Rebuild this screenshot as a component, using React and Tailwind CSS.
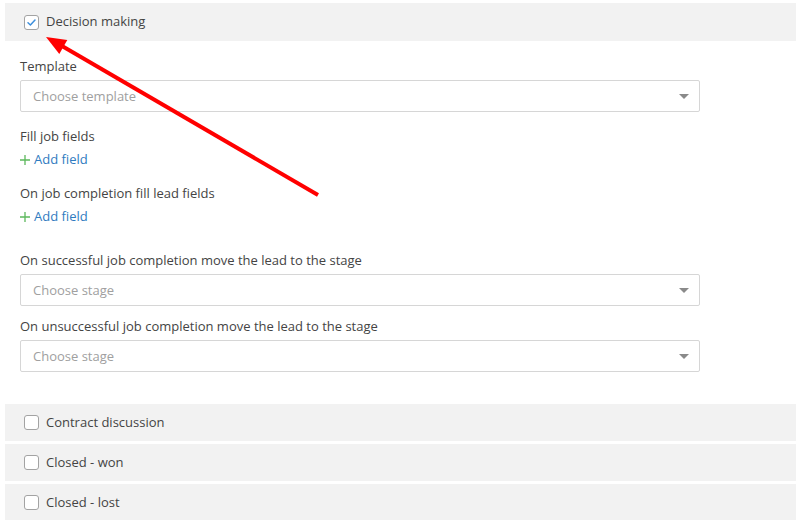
import React from "react";

function Checkbox({ checked }) {
  return (
    <div className="w-[15px] h-[15px] rounded-[3px] border border-[#a3a3a3] bg-white flex items-center justify-center shrink-0">
      {checked && (
        <svg width="11" height="11" viewBox="0 0 11 11">
          <path d="M2 5.8 L4.4 8 L9 3" fill="none" stroke="#3d8fdc" strokeWidth="1.5" strokeLinecap="round" strokeLinejoin="round" />
        </svg>
      )}
    </div>
  );
}

function Row({ label, checked, className = "" }) {
  return (
    <div className={"h-[37px] bg-[#f2f2f2] flex items-center pl-[19px] gap-[7px] " + className}>
      <Checkbox checked={checked} />
      <span className="text-[13px] text-[#444]">{label}</span>
    </div>
  );
}

function Select({ placeholder, className = "" }) {
  return (
    <div className={"w-[680px] h-[32px] border border-[#d6d6d6] rounded-[2px] bg-white flex items-center justify-between pl-[12px] pr-[10px] " + className}>
      <span className="text-[13px] text-[#a0a0a0] pt-[2px]">{placeholder}</span>
      <svg width="10" height="5" viewBox="0 0 10 5">
        <path d="M0 0 L10 0 L5 5 Z" fill="#8a8a8a" />
      </svg>
    </div>
  );
}

function Label({ children, className = "" }) {
  return <div className={"text-[13px] leading-[18px] text-[#444] " + className}>{children}</div>;
}

function AddField({ className = "" }) {
  return (
    <div className={"flex items-center gap-[4px] text-[13px] leading-[18px] " + className}>
      <svg width="10" height="10" viewBox="0 0 10 10" className="mt-[1px]">
        <path d="M5 0 V10 M0 5 H10" stroke="#5cb85c" strokeWidth="1.3" />
      </svg>
      <span className="text-[#2f7bc0]">Add field</span>
    </div>
  );
}

export default function App() {
  return (
    <div
      className="relative w-[796px] h-[520px] bg-white overflow-hidden"
      style={{ fontFamily: '"Open Sans", "Liberation Sans", sans-serif' }}
    >
      <div className="pl-[5px] pt-[3px]">
        <Row label="Decision making" checked className="h-[38px]" />
        <div className="pl-[15px] pb-[32px]">
          <Label className="mt-[16px] mb-[5px]">Template</Label>
          <Select placeholder="Choose template" />
          <Label className="mt-[15px]">Fill job fields</Label>
          <AddField className="mt-[5px]" />
          <Label className="mt-[16px]">On job completion fill lead fields</Label>
          <AddField className="mt-[5px]" />
          <Label className="mt-[26px] mb-[5px]">On successful job completion move the lead to the stage</Label>
          <Select placeholder="Choose stage" />
          <Label className="mt-[11px] mb-[5px]">On unsuccessful job completion move the lead to the stage</Label>
          <Select placeholder="Choose stage" />
        </div>
        <Row label="Contract discussion" className="mb-[3px]" />
        <Row label="Closed - won" className="mb-[3px]" />
        <Row label="Closed - lost" />
      </div>
      <svg className="absolute inset-0 pointer-events-none" width="796" height="520" viewBox="0 0 796 520">
        <line x1="318" y1="195" x2="62" y2="46" stroke="#ff0000" strokeWidth="4" />
        <polygon points="46,37 67.3,40.1 59.3,53.9" fill="#ff0000" />
      </svg>
    </div>
  );
}
